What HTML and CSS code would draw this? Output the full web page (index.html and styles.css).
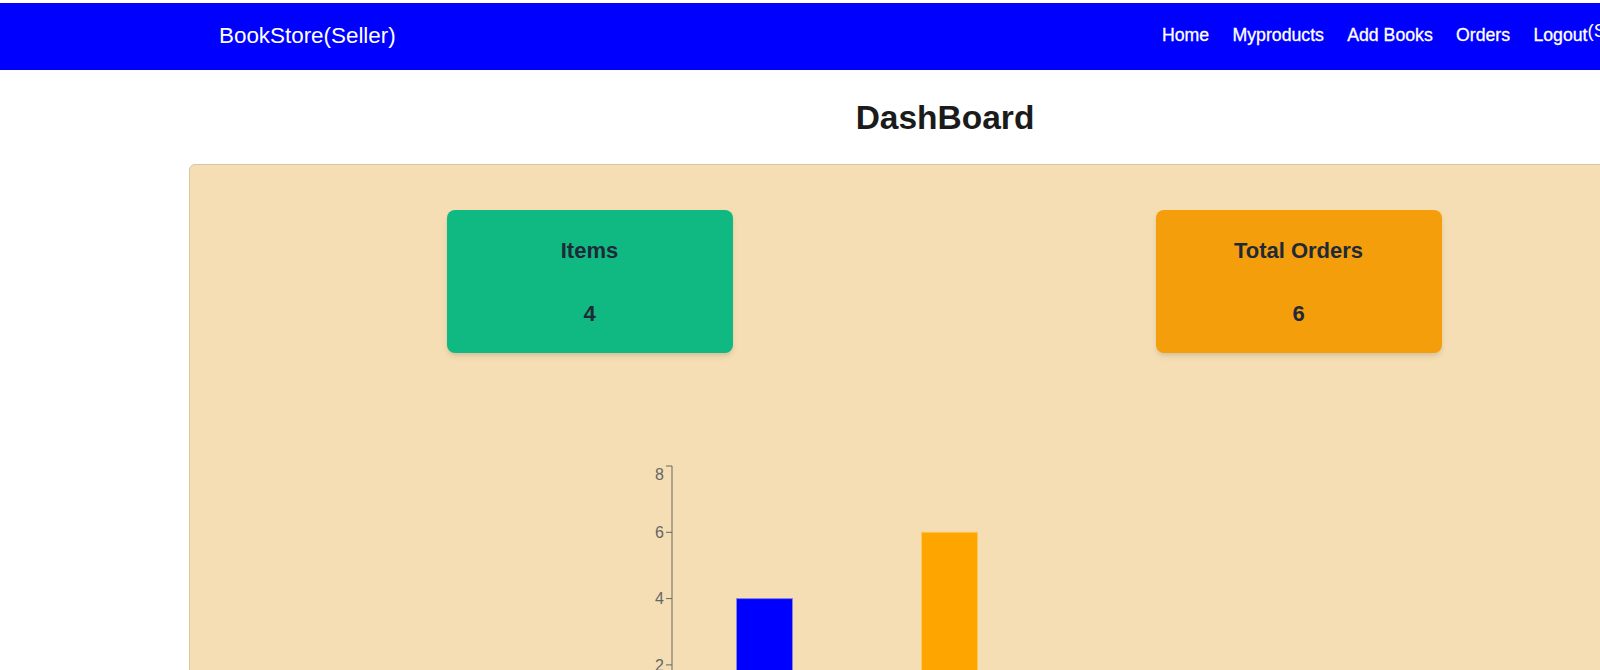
FILE: index.html
```html
<!DOCTYPE html>
<html lang="en">
<head>
<meta charset="utf-8">
<title>BookStore(Seller) - DashBoard</title>
<link rel="stylesheet" href="styles.css">
</head>
<body>
<div class="page">
  <nav class="navbar">
    <a class="brand" href="#">BookStore(Seller)</a>
    <ul class="nav-links">
      <li><a href="#">Home</a></li>
      <li><a href="#">Myproducts</a></li>
      <li><a href="#">Add Books</a></li>
      <li><a href="#">Orders</a></li>
      <li><a href="#">Logout</a><span class="user">(Seller)</span></li>
    </ul>
  </nav>
  <main class="content">
    <h2 class="title">DashBoard</h2>
    <section class="panel">
      <div class="stats">
        <div class="stat stat-items">
          <h3>Items</h3>
          <p>4</p>
        </div>
        <div class="stat stat-orders">
          <h3>Total Orders</h3>
          <p>6</p>
        </div>
      </div>
      <div class="chart">
        <svg class="chart-svg" width="600" height="300" viewBox="0 0 600 300">
          <g class="y-axis">
            <line class="axis-line" x1="65" y1="5" x2="65" y2="270.3"></line>
            <line class="axis-line" x1="59" y1="5" x2="65" y2="5"></line>
            <line class="axis-line" x1="59" y1="71.3" x2="65" y2="71.3"></line>
            <line class="axis-line" x1="59" y1="137.6" x2="65" y2="137.6"></line>
            <line class="axis-line" x1="59" y1="203.9" x2="65" y2="203.9"></line>
            <line class="axis-line" x1="59" y1="270.3" x2="65" y2="270.3"></line>
            <text class="tick" x="57" y="18.7">8</text>
            <text class="tick" x="57" y="77">6</text>
            <text class="tick" x="57" y="143.3">4</text>
            <text class="tick" x="57" y="209.6">2</text>
          </g>
          <rect class="bar-items" x="129.5" y="137.6" width="56" height="132.7"></rect>
          <rect class="bar-orders" x="314.5" y="71.3" width="56" height="199"></rect>
        </svg>
      </div>
    </section>
  </main>
</div>
</body>
</html>
```

FILE: styles.css
```css
html, body {
  margin: 0;
  padding: 0;
  overflow: hidden;
  background: #ffffff;
}

body {
  font-family: "Liberation Sans", Arial, sans-serif;
  color: #212529;
}

.page {
  width: 1890px;
  padding-top: 3px;
}

.navbar {
  display: grid;
  grid-template-columns: 943px auto;
  align-items: center;
  height: 67px;
  box-sizing: border-box;
  padding: 0 0 2px 219px;
  background: #0000ff;
}

.brand {
  color: #ffffff;
  font-size: 22.4px;
  text-decoration: none;
  justify-self: start;
}

.nav-links {
  display: flex;
  align-items: center;
  gap: 23.3px;
  margin: 0;
  padding: 0;
  list-style: none;
}

.nav-links li {
  line-height: 20px;
}

.nav-links a {
  color: #ffffff;
  font-size: 17.7px;
  text-decoration: none;
  -webkit-text-stroke: 0.3px #ffffff;
}

.user {
  color: #ffffff;
  font-size: 18.5px;
  line-height: 0;
  vertical-align: 4px;
}

.title {
  margin: 28.5px 0 27.1px;
  text-align: center;
  font-size: 33.5px;
  line-height: 38.4px;
  font-weight: bold;
  color: #1b1b1b;
}

.panel {
  width: 80%;
  margin: 0 10%;
  box-sizing: border-box;
  padding: 45px 47px 200px 45px;
  background: #f5deb3;
  border: 1px solid #d5c6a6;
  border-radius: 6px;
}

.stats {
  display: grid;
  grid-template-columns: 1fr 1fr;
  justify-items: center;
}

.stat {
  width: 286px;
  height: 143px;
  box-sizing: border-box;
  padding: 26.5px 0;
  border-radius: 8px;
  display: flex;
  flex-direction: column;
  align-items: center;
  gap: 36px;
  box-shadow: 0 4px 6px -1px rgba(0, 0, 0, 0.1), 0 2px 4px -1px rgba(0, 0, 0, 0.06);
}

.stat h3,
.stat p {
  margin: 0;
  font-size: 22px;
  line-height: 27px;
  font-weight: bold;
  color: #1f2937;
}

.stat-items {
  background: #10b981;
}

.stat-orders {
  background: #f59e0b;
}

.chart {
  margin-top: 108px;
  margin-left: 372px;
}

.chart-svg {
  display: block;
  overflow: visible;
}

.axis-line {
  stroke: #666666;
  stroke-width: 1;
}

.tick {
  fill: #666666;
  font-family: "Liberation Sans", Arial, sans-serif;
  font-size: 16px;
  text-anchor: end;
}

.bar-items {
  fill: #0000ff;
  stroke: #8884d8;
}

.bar-orders {
  fill: #ffa500;
  stroke: #ffc658;
}
```
